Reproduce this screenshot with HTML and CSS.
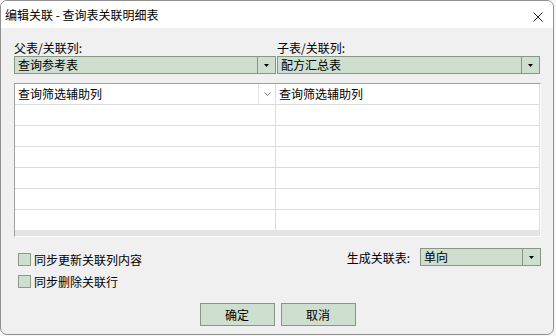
FILE: index.html
```html
<!DOCTYPE html>
<html lang="zh-CN">
<head>
    <meta charset="UTF-8">
    <title>编辑关联</title>
    <link rel="stylesheet" href="styles.css">
</head>
<body>
    <div class="dialog">
        <div class="titlebar">
            <span class="title">编辑关联 - 查询表关联明细表</span>
            <svg class="close" width="10" height="10" viewBox="0 0 10 10">
                <path d="M0.5 0.5 L9.5 9.5 M9.5 0.5 L0.5 9.5" />
            </svg>
        </div>

        <div class="content">
            <div class="pickers">
                <div class="field">
                    <span class="field-label">父表/关联列:</span>
                    <div class="combo">
                        <span class="combo-text">查询参考表</span>
                        <span class="combo-btn"><svg width="5" height="3" viewBox="0 0 5 3"><polygon points="0,0 5,0 2.5,3" /></svg></span>
                    </div>
                </div>
                <div class="field">
                    <span class="field-label">子表/关联列:</span>
                    <div class="combo">
                        <span class="combo-text">配方汇总表</span>
                        <span class="combo-btn"><svg width="5" height="3" viewBox="0 0 5 3"><polygon points="0,0 5,0 2.5,3" /></svg></span>
                    </div>
                </div>
            </div>

            <div class="grid">
                <div class="row">
                    <div class="cell">
                        <span class="cell-text">查询筛选辅助列</span>
                        <span class="cell-drop"><svg width="7" height="4" viewBox="0 0 7 4"><path d="M0.5 0.5 L3.5 3.5 L6.5 0.5" /></svg></span>
                    </div>
                    <div class="cell"><span class="cell-text">查询筛选辅助列</span></div>
                </div>
                <div class="row"><div class="cell"></div><div class="cell"></div></div>
                <div class="row"><div class="cell"></div><div class="cell"></div></div>
                <div class="row"><div class="cell"></div><div class="cell"></div></div>
                <div class="row"><div class="cell"></div><div class="cell"></div></div>
                <div class="row"><div class="cell"></div><div class="cell"></div></div>
                <div class="row"><div class="cell"></div><div class="cell"></div></div>
                <div class="grid-foot"></div>
            </div>

            <div class="options">
                <div class="checks">
                    <label class="check"><span class="box"></span>同步更新关联列内容</label>
                    <label class="check"><span class="box"></span>同步删除关联行</label>
                </div>
                <div class="link-row">
                    <span>生成关联表:</span>
                    <div class="combo combo-small">
                        <span class="combo-text">单向</span>
                        <span class="combo-btn"><svg width="5" height="3" viewBox="0 0 5 3"><polygon points="0,0 5,0 2.5,3" /></svg></span>
                    </div>
                </div>
            </div>

            <div class="actions">
                <button class="btn">确定</button>
                <button class="btn">取消</button>
            </div>
        </div>
    </div>
</body>
</html>
```

FILE: styles.css
```css
body {
    margin: 0;
    background-color: #f6f6f6;
    font-family: "Noto Sans CJK SC", "Liberation Sans", sans-serif;
    font-size: 12px;
    color: #000;
}

.dialog {
    width: 554px;
    height: 335px;
    box-sizing: border-box;
    border: 1px solid #909090;
    border-radius: 7px;
    background: #f0f0f0;
    overflow: hidden;
    display: flex;
    flex-direction: column;
}

.titlebar {
    height: 27px;
    background: #ffffff;
    display: flex;
    align-items: center;
    justify-content: space-between;
    padding: 0 10px 0 4px;
}

.title {
    line-height: 16px;
    padding-top: 1px;
}

.close {
    margin-top: 4px;
}

.close path {
    stroke: #222;
    stroke-width: 1;
    fill: none;
}

.content {
    padding: 11px 12px 0 13px;
}

.pickers {
    display: grid;
    grid-template-columns: 262px 263px;
    column-gap: 1px;
}

.field-label {
    display: block;
    line-height: 16px;
    height: 16px;
    padding-top: 1px;
}

.combo {
    height: 18px;
    box-sizing: border-box;
    border: 1px solid #869785;
    background: #cedecf;
    display: flex;
}

.combo-text {
    flex: 1;
    padding-left: 3px;
    line-height: 16px;
}

.combo-btn {
    width: 17px;
    border-left: 1px solid #869785;
    display: flex;
    align-items: center;
    justify-content: center;
}

.combo-btn polygon {
    fill: #000;
}

.grid {
    margin-top: 9px;
    border: 1px solid;
    border-color: #a0a0a0 #ffffff #ffffff #a0a0a0;
    box-shadow: inset -1px 0 #dcdcdc;
    background: #ffffff;
}

.row {
    display: grid;
    grid-template-columns: 261px 1fr;
    height: 21px;
    border-bottom: 1px solid #dcdcdc;
    box-sizing: border-box;
}

.row:nth-last-child(2) {
    border-bottom: none;
    height: 20px;
}

.cell {
    display: flex;
    border-right: 1px solid #dcdcdc;
}

.cell + .cell {
    border-right: none;
}

.cell-text {
    flex: 1;
    padding-left: 3px;
    line-height: 20px;
}

.cell-drop {
    width: 16px;
    border-left: 1px solid #e4e4e4;
    display: flex;
    align-items: center;
    justify-content: center;
}

.cell-drop path {
    stroke: #777;
    stroke-width: 1;
    fill: none;
}

.grid-foot {
    height: 6px;
    background: #e3e3e3;
}

.options {
    margin-top: 11px;
    display: flex;
    justify-content: space-between;
    align-items: flex-start;
}

.checks {
    padding-left: 4px;
}

.check {
    height: 22px;
    display: flex;
    align-items: center;
    gap: 3px;
}

.box {
    width: 13px;
    height: 13px;
    box-sizing: border-box;
    border: 1px solid #8a9a8a;
    background: #cedecf;
}

.link-row {
    display: flex;
    align-items: center;
    gap: 10px;
}

.combo-small {
    width: 121px;
}

.actions {
    margin-top: 11px;
    display: flex;
    justify-content: center;
    gap: 6px;
}

.btn {
    width: 75px;
    height: 23px;
    border: 1px solid #869785;
    background: #cedecf;
    font-family: inherit;
    font-size: 12px;
    color: #000;
    padding: 0;
}
```
